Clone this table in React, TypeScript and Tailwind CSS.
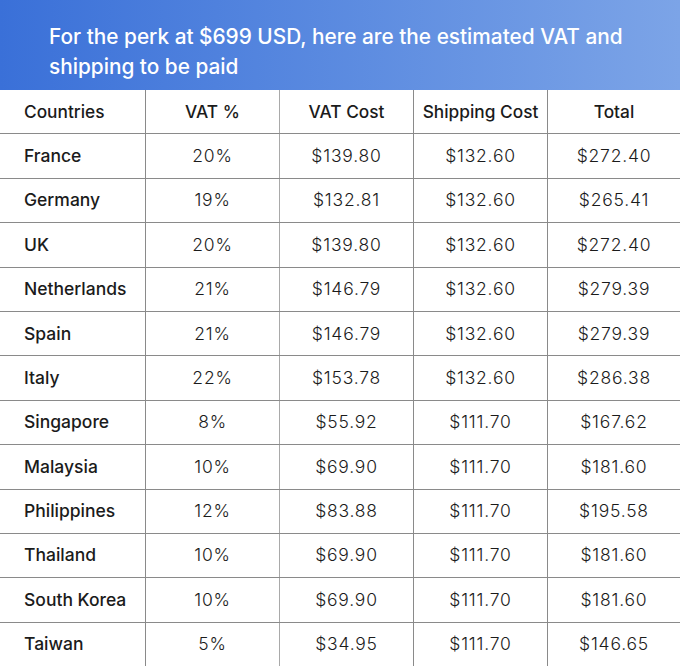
import React from "react";

const rows: [string, string, string, string, string][] = [
  ["France", "20%", "$139.80", "$132.60", "$272.40"],
  ["Germany", "19%", "$132.81", "$132.60", "$265.41"],
  ["UK", "20%", "$139.80", "$132.60", "$272.40"],
  ["Netherlands", "21%", "$146.79", "$132.60", "$279.39"],
  ["Spain", "21%", "$146.79", "$132.60", "$279.39"],
  ["Italy", "22%", "$153.78", "$132.60", "$286.38"],
  ["Singapore", "8%", "$55.92", "$111.70", "$167.62"],
  ["Malaysia", "10%", "$69.90", "$111.70", "$181.60"],
  ["Philippines", "12%", "$83.88", "$111.70", "$195.58"],
  ["Thailand", "10%", "$69.90", "$111.70", "$181.60"],
  ["South Korea", "10%", "$69.90", "$111.70", "$181.60"],
  ["Taiwan", "5%", "$34.95", "$111.70", "$146.65"],
];

const grid = "grid grid-cols-[146px_134px_134px_134px_1fr] flex-1";
const num = "flex items-center justify-center font-light text-[17.5px] tracking-[0.8px]";

export default function App() {
  return (
    <div
      className="w-[680px] h-[666px] flex flex-col bg-white overflow-hidden"
      style={{ fontFamily: "Inter, 'Noto Sans', sans-serif" }}
    >
      <div className="h-[90px] shrink-0 bg-gradient-to-r from-[#3a70d8] to-[#7ca4e7] pl-[49px] pt-[22px] pr-2">
        <p className="text-white text-[20.8px] font-medium leading-[30px] whitespace-nowrap">
          For the perk at $699 USD, here are the estimated VAT and
          <br />
          shipping to be paid
        </p>
      </div>
      <div className="flex-1 flex flex-col">
        <div className={grid + " text-[17.3px] text-[#1b1b1b] font-medium"}>
          <div className="flex items-center pl-6 border-r border-[#8a8a8a]">Countries</div>
          <div className="flex items-center justify-center border-r border-[#a9a9a9]">VAT %</div>
          <div className="flex items-center justify-center border-r border-[#8a8a8a]">VAT Cost</div>
          <div className="flex items-center justify-center border-r border-[#8a8a8a]">Shipping Cost</div>
          <div className="flex items-center justify-center">Total</div>
        </div>
        {rows.map((r) => (
          <div key={r[0]} className={grid + " border-t border-[#8a8a8a] text-[#1b1b1b]"}>
            <div className="flex items-center pl-6 border-r border-[#8a8a8a] font-medium text-[17.5px]">{r[0]}</div>
            <div className={num + " border-r border-[#a9a9a9]"}>{r[1]}</div>
            <div className={num + " border-r border-[#8a8a8a]"}>{r[2]}</div>
            <div className={num + " border-r border-[#8a8a8a]"}>{r[3]}</div>
            <div className={num}>{r[4]}</div>
          </div>
        ))}
      </div>
    </div>
  );
}
